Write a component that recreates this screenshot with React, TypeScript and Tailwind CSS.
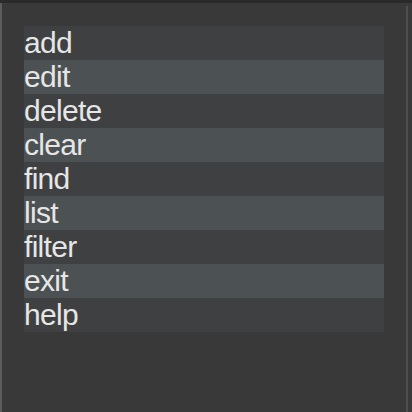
const commands = ['add', 'edit', 'delete', 'clear', 'find', 'list', 'filter', 'exit', 'help'];

export default function App() {
  return (
    <div className="w-[412px] h-[412px] flex flex-col bg-[#393939] overflow-hidden">
      <div className="h-[3px] bg-[#2a2a2a]" />
      <div className="flex-1 flex">
        <div className="w-[2px] bg-[#5c5c5c]" />
        <div className="flex-1 pl-[22px] pt-[23px]">
          <ul className="w-[360px] bg-[#3e4042]" style={{ fontFamily: '"Liberation Sans", Arial, sans-serif' }}>
            {commands.map((c, i) => (
              <li
                key={c}
                className={`h-[34px] text-[30px] leading-[34px] tracking-[-0.7px] text-[#e6e6e6] ${i % 2 === 1 ? 'bg-[#4c5153]' : ''}`}
              >
                {c}
              </li>
            ))}
          </ul>
        </div>
        <div className="w-[6px] pt-[3px] pr-[4px] flex">
          <div className="w-[2px] bg-[#4e4e4e]" />
        </div>
      </div>
    </div>
  );
}
